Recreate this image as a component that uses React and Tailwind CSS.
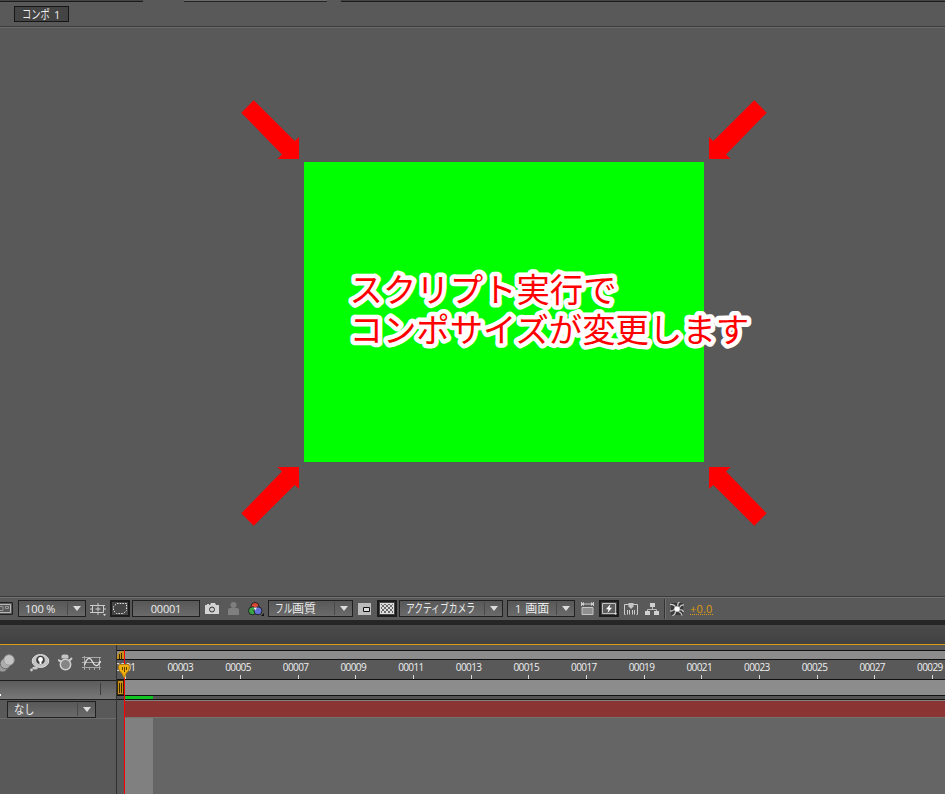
import clsx from "clsx";

const frames = [
  "00001", "00003", "00005", "00007", "00009", "00011", "00013", "00015",
  "00017", "00019", "00021", "00023", "00025", "00027", "00029",
];

const uiFont = "font-['Open_Sans','Noto_Sans_CJK_JP',sans-serif]";

function Select({ className, arrowClass, children }) {
  return (
    <div
      className={clsx(
        "flex h-[17px] shrink-0 items-center border border-[#202020] bg-linear-to-b from-[#585858] to-[#6a6a6a] text-[12px] leading-none text-[#ececec]",
        className,
      )}
    >
      <div className="min-w-0 flex-1 whitespace-nowrap">{children}</div>
      <div className={clsx("flex h-[13px] shrink-0 items-center justify-center border-l border-[#484848]", arrowClass || "w-[18px]")}>
        <svg width="8" height="5" viewBox="0 0 8 5">
          <path d="M0 0h8L4 5z" fill="#dcdcdc" />
        </svg>
      </div>
    </div>
  );
}

function Icon({ className, width = 14, height = 13, children }) {
  return (
    <svg
      className={clsx("shrink-0", className)}
      width={width}
      height={height}
      viewBox={`0 0 ${width} ${height}`}
      fill="none"
    >
      {children}
    </svg>
  );
}

function PressedBox({ className, children }) {
  return (
    <div className={clsx("flex h-[17px] w-[20px] shrink-0 items-center justify-center border-2 border-[#1c1c1c] bg-[#454545]", className)}>
      {children}
    </div>
  );
}

function TabBar() {
  return (
    <div className="h-[28px] border-b border-[#6a6a6a] bg-[#595959]">
      <div className="flex h-[2px]">
        <div className="w-[143px] border-b border-[#1c1c1c] bg-[#444]" />
        <div className="ml-[41px] w-[143px] border-b border-[#242424] bg-[#6a6a6a]" />
        <div className="ml-[14px] flex-1 border-b border-[#1c1c1c] bg-[#444]" />
      </div>
      <div className="flex h-[25px] border-b border-[#3c3c3c] pt-[4px] pl-[14px]">
        <div className="h-[16px] w-[55px] border border-[#161616] bg-[#444] pl-[7px] text-[12px] leading-[15px] whitespace-nowrap text-[#ececec]">
          <span className="inline-block origin-left scale-x-[0.77]">コンポ</span>
          <span className="-ml-[4px] text-[11px]">1</span>
        </div>
      </div>
    </div>
  );
}

const arrowPoints = "241.3,112.7 253.7,100.3 294.7,141 299,137 299,159 277.3,159 282,154.5";

function Viewer() {
  return (
    <div className="relative h-[568px] bg-[#595959] pt-[134px] pl-[304px]">
      <div className="h-[300px] w-[400px] bg-[#00ff00]" />
      {/* arrows and caption drawn over the composition */}
      <svg className="absolute top-0 left-0" width="945" height="568" viewBox="0 28 945 568" fill="#ff0000">
        <polygon points={arrowPoints} />
        <polygon points={arrowPoints} transform="translate(1008 0) scale(-1 1)" />
        <polygon points={arrowPoints} transform="translate(0 626) scale(1 -1)" />
        <polygon points={arrowPoints} transform="translate(1008 626) scale(-1 -1)" />
        <g
          className="font-['Noto_Sans_CJK_JP',sans-serif] text-[33.4px]"
          stroke="#fff"
          strokeWidth="9"
          strokeLinejoin="round"
          strokeLinecap="round"
          paintOrder="stroke"
        >
          <text x="349.500" y="302">スクリプト実行で</text>
          <text x="349.500" y="342">コンポサイズが変更します</text>
        </g>
      </svg>
    </div>
  );
}

function ViewerToolbar() {
  return (
    <div className="flex h-[24px] items-center border-t border-[#3c3c3c] bg-[#595959] shadow-[inset_0_1px_#707070]">
      <Icon width={13}>
        <path d="M-1 .5h13.500v12H-1" stroke="#222" />
        <path d="M0 2.500h10.500v8H0" stroke="#b8b8b8" />
        <path d="M0 4.500h3v4H0M5.500 4.500h3v2h-3z" stroke="#999" />
      </Icon>
      <Select className="ml-[5px] w-[68px] pl-[6px]">
        <span className="text-[11px] tracking-[-0.1px]">100 %</span>
      </Select>
      <Icon className="ml-[4px]" width={16} height={14}>
        <path d="M2.500 3.500h11v7h-11z" stroke="#ccc" />
        <path d="M0 3.500h3M13 3.500h2M0 10.500h3M5.500 7h5M8 4.500v5M8 1v2M8 11v2M0 7h3M13 7h3" stroke="#ccc" />
        <path d="M13 12h3l-1.500 2z" fill="#ddd" />
      </Icon>
      <PressedBox className="ml-[4px]">
        <Icon height={11}>
          <path d="M4 .5h9.500v7l-3 3h-7l-3-3v-4z" stroke="#e8e8e8" strokeDasharray="1.500 1.200" />
        </Icon>
      </PressedBox>
      <div className="ml-[2px] flex h-[17px] w-[68px] shrink-0 items-center justify-center border border-[#202020] bg-linear-to-b from-[#585858] to-[#6a6a6a] text-[11px] leading-none tracking-[-0.2px] text-[#ececec]">
        00001
      </div>
      <Icon className="ml-[5px]" height={11}>
        <path d="M0 2h2V1h2v1h1l1-2h4l1 2h3v9H0z" fill="#d4d4d4" />
        <circle cx="7" cy="6.500" r="2.500" fill="#ccc" stroke="#333" />
      </Icon>
      <Icon className="ml-[9px]" width={11}>
        <circle cx="5.500" cy="3" r="3" fill="#7f7f7f" />
        <path d="M0 13V8q0-2 2-2h7q2 0 2 2v5z" fill="#7f7f7f" />
      </Icon>
      <Icon className="ml-[9px]" width={16} height={14}>
        <circle cx="7" cy="4.500" r="4" fill="#e04a35" stroke="#222" />
        <circle cx="4.500" cy="8.800" r="4" fill="#3aa545" stroke="#222" />
        <circle cx="10" cy="8.800" r="4" fill="#6470d8" stroke="#222" />
        <path d="M5.500 5.500h3.500l-1.800 3z" fill="#eee" />
        <path d="M13 14h3v-3z" fill="#111" />
      </Icon>
      <Select className="ml-[4px] w-[85px] pl-[6px]">
        <span className="inline-block origin-left scale-x-[0.72]">フル</span>
        <span className="-ml-[7px] inline-block">画質</span>
      </Select>
      <Icon className="ml-[5px]" width={13} height={12}>
        <path d="M0 0h13v12H0z" fill="#bcbcbc" />
        <path d="M5.500 4.500h6v4h-6z" fill="#ddd" stroke="#111" />
      </Icon>
      <PressedBox className="ml-[6px]">
        <Icon width={14} height={11}>
          <defs>
            <pattern id="grid" width="4" height="4" patternUnits="userSpaceOnUse">
              <path d="M0 0h2v2H0zM2 2h2v2H2z" fill="#6b6b6b" />
            </pattern>
          </defs>
          <path d="M0 0h14v11H0z" fill="#ddd" />
          <path d="M1 1h12v9H1z" fill="url(#grid)" />
        </Icon>
      </PressedBox>
      <Select className="ml-[2px] w-[104px] pl-[6px]">
        <span className="inline-block origin-left scale-x-[0.73]">アクティブカメラ</span>
      </Select>
      <Select className="ml-[4px] w-[68px] pl-[7px]">
        <span className="text-[11px]">1</span>
        <span className="ml-[4px] inline-block">画面</span>
      </Select>
      <Icon className="ml-[6px]" width={13}>
        <path d="M.5 0v4M12.500 0v4M1 2h11" stroke="#ccc" />
        <path d="M3 0v4L0 2zM10 0v4l3-2z" fill="#ccc" />
        <path d="M1 5.500h11v7H1z" fill="#8f8f8f" stroke="#c4c4c4" />
      </Icon>
      <PressedBox className="ml-[5px]">
        <Icon width={15} height={12}>
          <path d="M.5 .5h13v10H.5z" fill="#5c5c5c" stroke="#c0c0c0" />
          <path d="M8.500 1L4 6.300h2.500L5.500 10 10 4.800H7.500z" fill="#fff" />
          <path d="M12 10h3l-1.500 2z" fill="#ddd" />
        </Icon>
      </PressedBox>
      <Icon className="ml-[5px]" width={14} height={12}>
        <path d="M5 1.500H.5v10h1M9 1.500h4.500v10h-1" stroke="#ccc" />
        <path d="M3.500 11.500V7M5.500 11.500V7M8.500 11.500V7M10.500 11.500V7" stroke="#ccc" />
        <path d="M4.500 0h5v3.500L7 6 4.500 3.500z" fill="#c4c4c4" />
      </Icon>
      <Icon className="ml-[7px]" width={14} height={12}>
        <path d="M5 0h5v4H5zM0 8h5v4H0zM9 8h5v4H9z" fill="#d0d0d0" />
        <path d="M7.500 4v2M2.500 8V6.500h9V8" stroke="#bbb" />
      </Icon>
      <div className="ml-[5px] h-[20px] w-[2px] border-l border-[#333] bg-[#707070]" />
      <Icon className="ml-[4px]" width={14} height={14}>
        <path d="M1 1h12v12H1z" fill="#3a3a3a" />
        <g stroke="#d0d0d0" strokeWidth="1.200">
          <path d="M5.500 4.500Q3 2 0 2.500M8 4Q7 1.500 9.500 0M9.500 5.500Q11 2.500 14 3M9.500 8q3-1 4 2M8.500 9.500q3 1 3.500 4M5.500 9.500q0 3-3 4M4 7.500Q2 10 0 8.500" />
        </g>
        <circle cx="7" cy="7" r="2.800" fill="#fff" />
      </Icon>
      <span className="ml-[6px] h-[13px] border-b border-dotted border-[#dc9a12] text-[11px] leading-[13px] tracking-[0.2px] text-[#dc9a12]">
        +0.0
      </span>
    </div>
  );
}

function LayerControls() {
  return (
    <div className="w-[117px] shrink-0 border-r border-[#303030] bg-[#595959]">
      <div className="flex h-[35px] items-center">
        <Icon width={15} height={18}>
          <circle cx="2.500" cy="13" r="5" fill="#999" stroke="#6a6a6a" />
          <circle cx="5.500" cy="9.500" r="5.200" fill="#adadad" stroke="#6a6a6a" />
          <circle cx="9" cy="6" r="5.200" fill="#c4c4c4" stroke="#9a9a9a" />
        </Icon>
        <Icon className="ml-[15px]" width={20} height={18}>
          <ellipse cx="10.500" cy="7" rx="8.300" ry="6.500" fill="#c4c4c4" stroke="#dcdcdc" />
          <circle cx="10.500" cy="6" r="4.300" fill="#3c3c3c" />
          <circle cx="10.500" cy="5.500" r="2.400" fill="#fff" />
          <path d="M9.500 7h2v3h-2z" fill="#fff" />
          <ellipse cx="5" cy="14" rx="2.800" ry="1.500" fill="#c8c8c8" />
          <circle cx="1.500" cy="16" r="1.400" fill="#c8c8c8" />
        </Icon>
        <Icon className="ml-[8px]" width={15} height={18}>
          <path d="M3.500 2q0-1.500 2-1.500h3q2 0 2 1.500v2.500h-7z" fill="#c4c4c4" />
          <path d="M0 6l3 1.500M14 4l-2.500 2.500" stroke="#ccc" strokeWidth="2" />
          <circle cx="7.500" cy="10.500" r="5.200" fill="#858585" stroke="#d0d0d0" strokeWidth="1.500" />
        </Icon>
        <Icon className="ml-[9px]" width={20} height={16}>
          <path d="M0 2.500h19M0 12.500h19M2.500 1v14M0 7.500h19M17.500 2v10M7.500 12v3M12.500 12v3M17.500 12v3" stroke="#a8a8a8" />
          <path d="M2.500 10C5 2 8 2 10 6s5 8 8.500 0" stroke="#e4e4e4" strokeWidth="1.300" />
        </Icon>
      </div>
      <div className="flex h-[20px] items-end border-y border-[#1d1d1d] bg-linear-to-b from-[#5c5c5c] to-[#777] pb-[4px]">
        <div className="mb-[-1px] h-[2px] w-[1px] bg-white" />
        <div className="ml-[99px] h-[12px] w-px bg-[#3d3d3d]" />
      </div>
      <div className="flex h-[19px] items-start border-b border-[#6c6c6c] pt-px pl-[7px]">
        <Select className="w-[89px] pl-[6px]">
          <span className="inline-block origin-left scale-x-[0.85]">なし</span>
        </Select>
      </div>
    </div>
  );
}

function Tracks() {
  return (
    <div className="relative min-w-0 flex-1 overflow-hidden bg-[#595959] pt-[5px]">
      <div className="h-[10px] border-y border-[#111] bg-[#8c8c8c]">
        <div className="h-full w-[7px] rounded-tl-[6px] bg-[#c8901a]">
          <svg width="7" height="8" viewBox="0 0 7 8">
            <path d="M2.500 3v5M4.500 2v6" stroke="#3a2a00" />
          </svg>
        </div>
      </div>
      <div className="flex h-[19px] bg-[#595959]">
        {frames.map((frame, i) => (
          <div
            key={frame}
            className={clsx(
              "flex w-[57.670px] shrink-0 flex-col items-center text-[10px] leading-[15px] tracking-[-0.6px] text-[#f0f0f0]",
              i === 0 && "-ml-[20.700px]",
            )}
          >
            <span className="-ml-[5px]">{frame}</span>
            <span className="h-[4px] w-px bg-[#ddd]" />
          </div>
        ))}
      </div>
      <div className="h-[17px] border-y border-[#111] bg-[#8c8c8c]">
        <div className="flex h-full w-[7px] items-center justify-center gap-px border border-[#3a2a00] bg-[#c8901a]">
          <span className="h-[10px] w-px bg-[#3a2a00]" />
          <span className="h-[10px] w-px bg-[#3a2a00]" />
        </div>
      </div>
      <div className="h-[4px] border-b border-[#111] bg-[#555]">
        <div className="ml-[8px] h-[3px] w-[28px] bg-[#10c424]" />
      </div>
      <div className="ml-[7px] h-[17px] border-t border-[#808080] bg-[#8a3434]" />
      <div className="ml-[7px] flex h-[78px] border-t border-[#737373] bg-[#656565]">
        <div className="w-[29px] bg-[#808080]" />
      </div>
      {/* playhead */}
      <div className="absolute top-[5px] bottom-0 left-[7px] w-px bg-[#ff0000]" />
      <svg className="absolute top-[19px] left-px" width="12" height="15" viewBox="0 0 12 15">
        <path d="M1.500 .5h9q1 1 1 3.500Q11 7 8 9.500L6.500 14 4 9.500Q1 7 .5 4 .5 1.500 1.500.5z" fill="#eeb010" stroke="#b47c08" />
        <path d="M4.500 3v3M6.500 3v5M8.500 3v3" stroke="#5c4000" />
      </svg>
    </div>
  );
}

export default function App() {
  return (
    <div className={clsx("flex h-[794px] w-[945px] flex-col overflow-hidden bg-[#595959]", uiFont)}>
      <TabBar />
      <Viewer />
      <ViewerToolbar />
      <div className="h-[5px] bg-[#262626]" />
      <div className="h-[19px] bg-linear-to-b from-[#4b4b4b] to-[#414141]" />
      <div className="h-px bg-[#dc9a12]" />
      <div className="flex min-h-0 flex-1">
        <LayerControls />
        <Tracks />
      </div>
    </div>
  );
}
